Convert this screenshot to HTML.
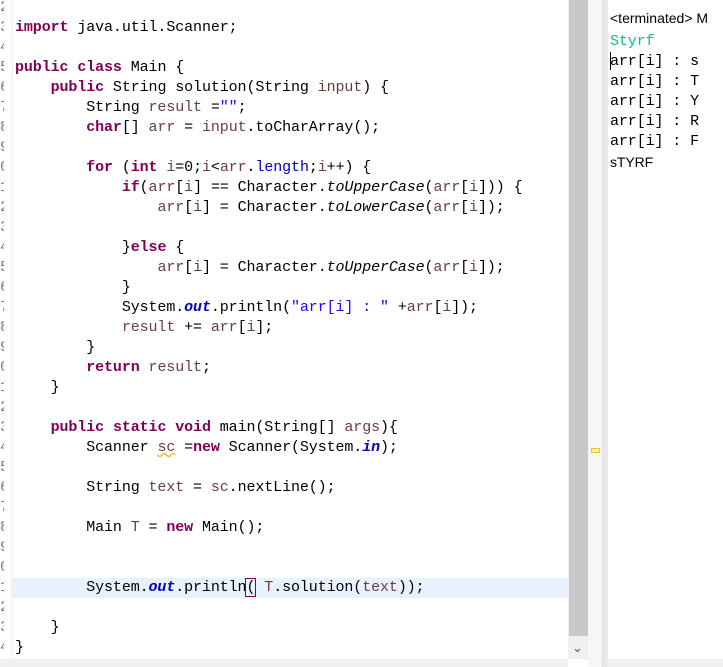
<!DOCTYPE html>
<html><head><meta charset="utf-8"><style>
body{margin:0;width:723px;height:667px;overflow:hidden;background:#fff;position:relative;font-family:"Liberation Mono",monospace;}
pre{margin:0;font-family:"Liberation Mono",monospace;font-size:15px;line-height:20px;letter-spacing:-0.1px;color:#000;}
#code{position:absolute;left:15px;top:-2px;}
.k{color:#7f0055;font-weight:bold}
.v{color:#6a3e3e}
.f{color:#0000c0}
.s{color:#2a00ff}
.fi{color:#0000c0;font-style:italic;font-weight:bold}
.i{font-style:italic}
#hl{position:absolute;left:11px;top:578px;width:557px;height:20px;background:#e8f2fe}
#gut{position:absolute;left:0;top:-2px;width:4px;overflow:hidden;color:#787878;}
#gsep{position:absolute;left:12px;top:0;width:1px;height:659px;background:#f0f0f0}
#sb{position:absolute;left:568px;top:0;width:20px;height:659px;background:#f0f0f0}
#thumb{position:absolute;left:569px;top:0;width:19px;height:636px;background:#c8c8c8}
#ruler{position:absolute;left:588px;top:0;width:14px;height:667px;background:#f6f6f6}
#brd{position:absolute;left:602px;top:0;width:5px;height:667px;background:#e8e8e8;border-left:1px solid #ddd}
#mark{position:absolute;left:591px;top:448px;width:7px;height:3px;border:1px solid #f0c030;background:#fff4b0}
#hbar{position:absolute;left:0;top:659px;width:568px;height:8px;background:#f0f0f0}
#hbar2{position:absolute;left:607px;top:659px;width:116px;height:8px;background:#f0f0f0}
#con{position:absolute;left:610px;top:32px;}
#term{position:absolute;left:610px;top:10px;font-family:"Liberation Sans",sans-serif;font-size:14px;color:#000;white-space:nowrap}
</style></head><body>
<div id="hl"></div>
<div id="gsep"></div>
<pre id="gut">2
3
4
5
6
7
8
9
0
1
2
3
4
5
6
7
8
9
0
1
2
3
4
5
6
7
8
9
0
1
2
3
4</pre>
<pre id="code">

<span class="k">import</span> java.util.Scanner;

<span class="k">public</span> <span class="k">class</span> Main {
    <span class="k">public</span> String solution(String <span class="v">input</span>) {
        String <span class="v">result</span> =<span class="s">""</span>;
        <span class="k">char</span>[] <span class="v">arr</span> = <span class="v">input</span>.toCharArray();

        <span class="k">for</span> (<span class="k">int</span> <span class="v">i</span>=0;<span class="v">i</span>&lt;<span class="v">arr</span>.<span class="f">length</span>;<span class="v">i</span>++) {
            <span class="k">if</span>(<span class="v">arr</span>[<span class="v">i</span>] == Character.<span class="i">toUpperCase</span>(<span class="v">arr</span>[<span class="v">i</span>])) {
                <span class="v">arr</span>[<span class="v">i</span>] = Character.<span class="i">toLowerCase</span>(<span class="v">arr</span>[<span class="v">i</span>]);

            }<span class="k">else</span> {
                <span class="v">arr</span>[<span class="v">i</span>] = Character.<span class="i">toUpperCase</span>(<span class="v">arr</span>[<span class="v">i</span>]);
            }
            System.<span class="fi">out</span>.println(<span class="s">"arr[i] : "</span> +<span class="v">arr</span>[<span class="v">i</span>]);
            <span class="v">result</span> += <span class="v">arr</span>[<span class="v">i</span>];
        }
        <span class="k">return</span> <span class="v">result</span>;
    }

    <span class="k">public</span> <span class="k">static</span> <span class="k">void</span> main(String[] <span class="v">args</span>){
        Scanner <span class="v" style="text-decoration:underline wavy #e0c040">sc</span> =<span class="k">new</span> Scanner(System.<span class="fi">in</span>);

        String <span class="v">text</span> = <span class="v">sc</span>.nextLine();

        Main <span class="v">T</span> = <span class="k">new</span> Main();


        System.<span class="fi">out</span>.println<span style="outline:1px solid #7f0055">(</span> <span class="v">T</span>.solution(<span class="v">text</span>));

    }
}</pre>
<div id="sb"></div><div id="thumb"></div>
<div style="position:absolute;left:572px;top:640px;color:#555;font-family:'Liberation Sans',sans-serif;font-size:13px">&#8964;</div>
<div id="ruler"></div><div id="mark"></div>
<div id="brd"></div>
<div id="hbar"></div><div id="hbar2"></div>
<div id="term">&lt;terminated&gt; M</div>
<pre id="con"><span style="color:#00c87d">Styrf</span>
arr[i] : s
arr[i] : T
arr[i] : Y
arr[i] : R
arr[i] : F
<span style="font-family:'Liberation Sans',sans-serif;font-size:14px">sTYRF</span></pre>
<div style="position:absolute;left:610px;top:52px;width:1px;height:18px;background:#000"></div>
</body></html>
